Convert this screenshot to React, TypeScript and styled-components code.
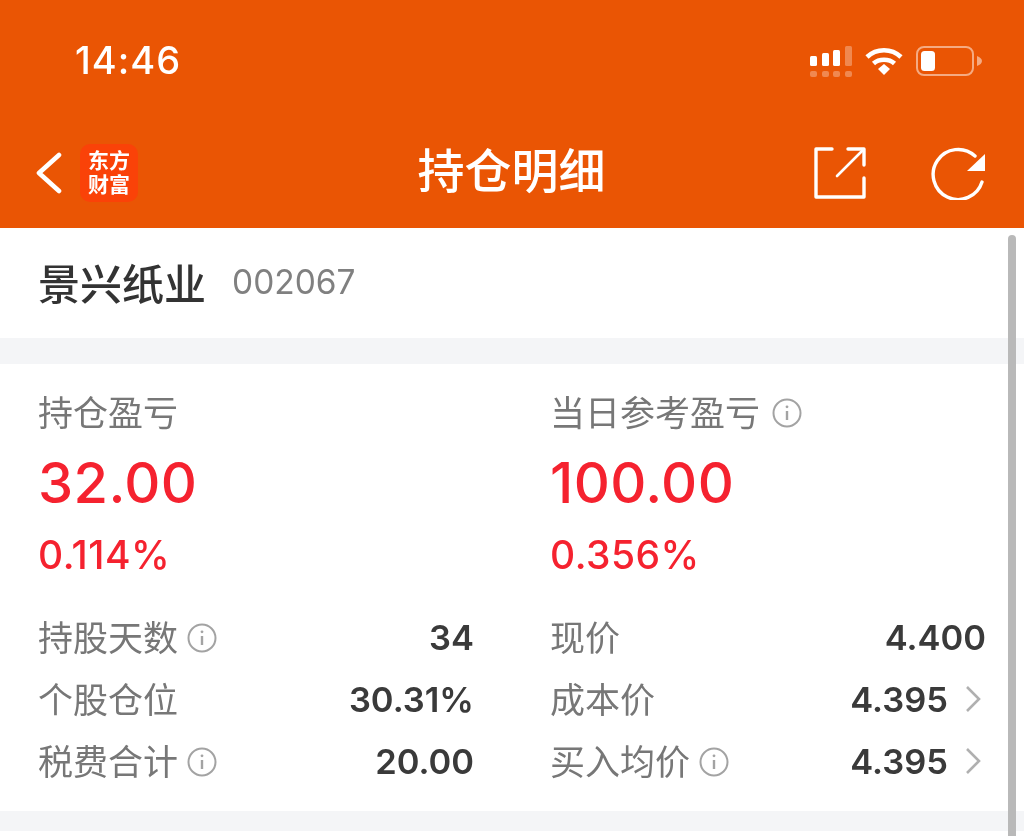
import React from "react";
import styled, { createGlobalStyle } from "styled-components";

const CJK = `"Inter", "Noto Sans CJK SC", sans-serif`;
const ORANGE = "#ea5504";
const RED = "#f5222f";

const GlobalStyle = createGlobalStyle`
  html, body {
    margin: 0;
    padding: 0;
    background: #ffffff;
    overflow: hidden;
  }
  body {
    font-family: ${CJK};
  }
`;

const Page = styled.div`
  position: relative;
  width: 1024px;
  height: 836px;
  overflow: hidden;
  background: #ffffff;
  filter: blur(0.6px);
`;

const Header = styled.header`
  height: 228px;
  background: ${ORANGE};
  color: #ffffff;
  display: flex;
  flex-direction: column;
`;

const StatusBar = styled.div`
  height: 118px;
  padding: 2px 42px 0 75px;
  box-sizing: border-box;
  display: flex;
  align-items: center;
  justify-content: space-between;
`;

const Time = styled.span`
  font-size: 38px;
  font-weight: 500;
  letter-spacing: 1px;
`;

const StatusIcons = styled.div`
  display: flex;
  align-items: center;
  gap: 13px;
  margin-top: 2px;
`;

const NavBar = styled.nav`
  flex: 1;
  display: grid;
  grid-template-columns: 1fr auto 1fr;
  align-items: center;
  padding: 0 37px 0 36px;
`;

const NavLeft = styled.div`
  display: flex;
  align-items: center;
  gap: 18px;
`;

const NavRight = styled.div`
  display: flex;
  align-items: center;
  justify-content: flex-end;
  gap: 64px;
`;

const Title = styled.h1`
  margin: 0;
  padding-bottom: 6px;
  font-size: 47px;
  font-weight: 500;
  line-height: 1;
`;

const Logo = styled.div`
  width: 58px;
  height: 58px;
  border-radius: 10px;
  background: #fa4208;
  display: flex;
  align-items: center;
  justify-content: center;
  text-align: center;
  font-family: "Liberation Sans", "Noto Sans CJK SC", sans-serif;
  font-size: 21px;
  font-weight: 700;
  line-height: 24.5px;
`;

const NameCard = styled.section`
  height: 110px;
  display: flex;
  align-items: center;
  gap: 26px;
  padding: 0 38px 3px;
  box-sizing: border-box;
`;

const StockName = styled.span`
  font-size: 42px;
  font-weight: 500;
  color: #333333;
`;

const StockCode = styled.span`
  font-size: 33.5px;
  color: #808080;
`;

const Gap = styled.div<{ $h: number }>`
  height: ${(p) => p.$h}px;
  background: #f4f5f7;
`;

const DetailCard = styled.section`
  height: 447px;
  padding: 26px 38px 0 38px;
  box-sizing: border-box;
  display: grid;
  grid-template-columns: 436px 436px;
  column-gap: 76px;
`;

const Column = styled.div`
  display: flex;
  flex-direction: column;
`;

const ProfitLabel = styled.div`
  display: flex;
  align-items: center;
  gap: 12px;
  height: 40px;
  margin-bottom: 4px;
  font-size: 35px;
  color: #777777;
`;

const ProfitValue = styled.div`
  font-size: 56px;
  line-height: 70px;
  margin-top: 14px;
  font-weight: 500;
  letter-spacing: 0.4px;
  color: ${RED};
`;

const ProfitRate = styled.div`
  font-size: 39px;
  line-height: 46px;
  margin-top: 14px;
  font-weight: 500;
  letter-spacing: 0.5px;
  color: ${RED};
`;

const Rows = styled.div`
  margin-top: 28px;
  display: flex;
  flex-direction: column;
`;

const Row = styled.div`
  height: 62px;
  display: flex;
  align-items: center;
  justify-content: space-between;
`;

const RowLabel = styled.span`
  display: flex;
  align-items: center;
  gap: 9px;
  padding-bottom: 4px;
  font-size: 35px;
  color: #777777;
`;

const RowValue = styled.span`
  display: flex;
  align-items: center;
  gap: 16px;
  font-size: 34.5px;
  font-weight: 600;
  color: #3a3a3a;
`;

const Scrollbar = styled.div`
  position: absolute;
  top: 235px;
  right: 8px;
  bottom: 0;
  width: 8px;
  border-radius: 4px 4px 0 0;
  background: #b9b9b9;
`;

const InfoSvg = styled.svg`
  margin-top: 5px;
`;

const ChevronSvg = styled.svg`
  margin-right: 4px;
`;

const InfoIcon = () => (
  <InfoSvg width="30" height="30" viewBox="0 0 30 30" fill="none" stroke="#a3a3a3" strokeWidth="2">
    <circle cx="15" cy="15" r="13.5" />
    <path d="M15 13v9" strokeWidth="2.4" />
    <circle cx="15" cy="8.8" r="1.4" fill="#a3a3a3" stroke="none" />
  </InfoSvg>
);

const RowChevron = () => (
  <ChevronSvg width="18" height="30" viewBox="0 0 18 30" fill="none" stroke="#b0b0b0" strokeWidth="2.6">
    <path d="M3 3l12 12L3 27" />
  </ChevronSvg>
);

const SignalIcon = () => (
  <svg width="42" height="31" viewBox="0 0 42 31" fill="#ffffff">
    <rect x="0" y="10" width="7" height="10" rx="1.5" />
    <rect x="12" y="7" width="7" height="13" rx="1.5" />
    <rect x="23" y="4" width="7" height="16" rx="1.5" />
    <rect x="35" y="0" width="7" height="20" rx="1.5" opacity="0.3" />
    <g opacity="0.3">
      <rect x="0" y="25" width="7" height="6" rx="2" />
      <rect x="12" y="25" width="7" height="6" rx="2" />
      <rect x="23" y="25" width="7" height="6" rx="2" />
      <rect x="35" y="25" width="7" height="6" rx="2" />
    </g>
  </svg>
);

const WifiIcon = () => (
  <svg width="38" height="28" viewBox="0 0 38 28" fill="none" stroke="#ffffff" strokeWidth="4.6">
    <path d="M2 10C11.5 1 26.5 1 36 10" />
    <path d="M8.5 16.5C14 11.5 24 11.5 29.5 16.5" />
    <path d="M13 22l6-5 6 5-6 6z" fill="#ffffff" stroke="none" />
  </svg>
);

const BatteryIcon = () => (
  <svg width="66" height="30" viewBox="0 0 66 30" fill="none">
    <rect x="1" y="1" width="56" height="28" rx="7" stroke="#ffffff" strokeOpacity="0.5" strokeWidth="2" />
    <rect x="5" y="5" width="14" height="20" rx="3.5" fill="#ffffff" />
    <path d="M61 10c3 1 5 3 5 5s-2 4-5 5z" fill="#ffffff" fillOpacity="0.5" />
  </svg>
);

const BackIcon = () => (
  <svg width="26" height="42" viewBox="0 0 26 42" fill="none" stroke="#ffffff" strokeWidth="4.6" strokeLinecap="round" strokeLinejoin="round">
    <path d="M23 3L3 21l20 18" />
  </svg>
);

const ShareIcon = () => (
  <svg width="54" height="54" viewBox="0 0 54 54" fill="none" stroke="#ffffff" strokeWidth="3.4" strokeLinecap="round" strokeLinejoin="round">
    <path d="M19 3H3v48h48V32" />
    <path d="M35 3h16v16" />
    <path d="M50 4L24 30" strokeWidth="2.6" />
  </svg>
);

const RefreshIcon = () => (
  <svg width="56" height="54" viewBox="0 0 56 54" fill="none">
    <path d="M44 10A25 25 0 1 0 51 36" stroke="#ffffff" strokeWidth="3.4" strokeLinecap="round" />
    <path d="M54 8v17H36z" fill="#ffffff" />
  </svg>
);

const App = () => (
  <Page>
    <GlobalStyle />
    <Header>
      <StatusBar>
        <Time>14:46</Time>
        <StatusIcons>
          <SignalIcon />
          <WifiIcon />
          <BatteryIcon />
        </StatusIcons>
      </StatusBar>
      <NavBar>
        <NavLeft>
          <BackIcon />
          <Logo>
            东方
            <br />
            财富
          </Logo>
        </NavLeft>
        <Title>持仓明细</Title>
        <NavRight>
          <ShareIcon />
          <RefreshIcon />
        </NavRight>
      </NavBar>
    </Header>
    <NameCard>
      <StockName>景兴纸业</StockName>
      <StockCode>002067</StockCode>
    </NameCard>
    <Gap $h={26} />
    <DetailCard>
      <Column>
        <ProfitLabel>持仓盈亏</ProfitLabel>
        <ProfitValue>32.00</ProfitValue>
        <ProfitRate>0.114%</ProfitRate>
        <Rows>
          <Row>
            <RowLabel>持股天数<InfoIcon /></RowLabel>
            <RowValue>34</RowValue>
          </Row>
          <Row>
            <RowLabel>个股仓位</RowLabel>
            <RowValue>30.31%</RowValue>
          </Row>
          <Row>
            <RowLabel>税费合计<InfoIcon /></RowLabel>
            <RowValue>20.00</RowValue>
          </Row>
        </Rows>
      </Column>
      <Column>
        <ProfitLabel>当日参考盈亏<InfoIcon /></ProfitLabel>
        <ProfitValue>100.00</ProfitValue>
        <ProfitRate>0.356%</ProfitRate>
        <Rows>
          <Row>
            <RowLabel>现价</RowLabel>
            <RowValue>4.400</RowValue>
          </Row>
          <Row>
            <RowLabel>成本价</RowLabel>
            <RowValue>4.395<RowChevron /></RowValue>
          </Row>
          <Row>
            <RowLabel>买入均价<InfoIcon /></RowLabel>
            <RowValue>4.395<RowChevron /></RowValue>
          </Row>
        </Rows>
      </Column>
    </DetailCard>
    <Gap $h={20} />
    <Scrollbar />
  </Page>
);

export default App;
